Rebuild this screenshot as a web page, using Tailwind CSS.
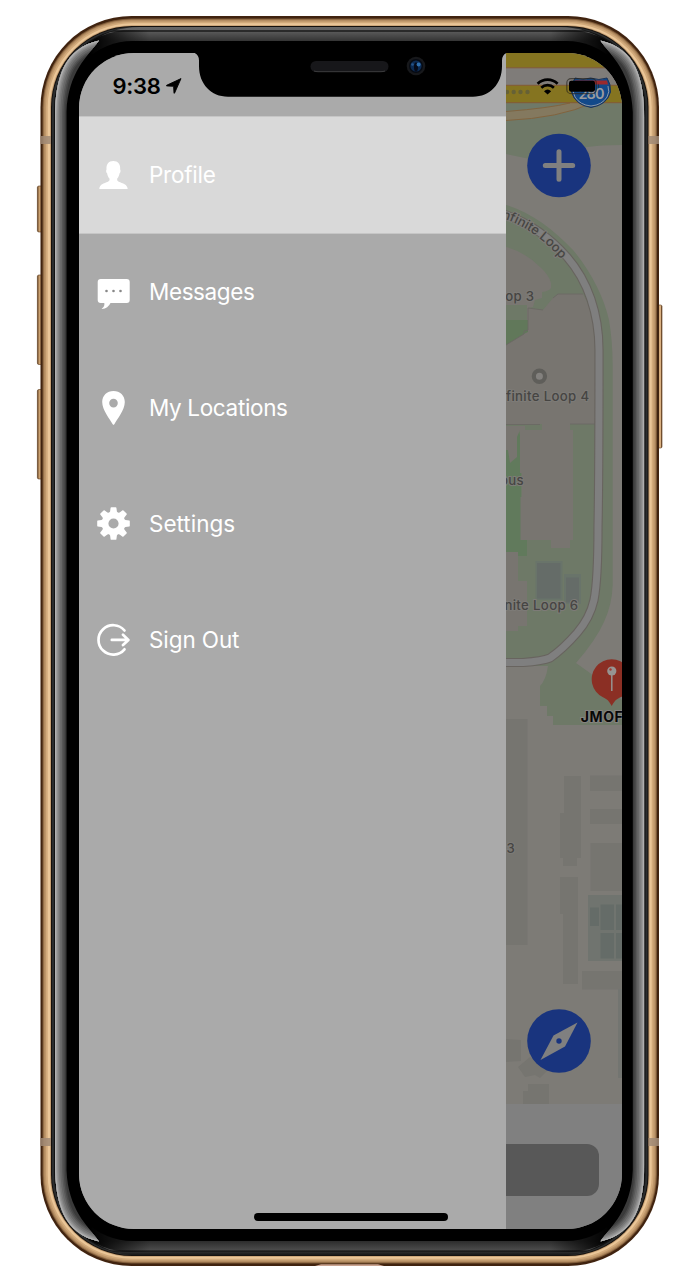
<!DOCTYPE html>
<html lang="en">
<head>
<meta charset="utf-8">
<title>Menu</title>
<script src="https://cdn.jsdelivr.net/npm/@tailwindcss/browser@4"></script>
</head>
<body class="bg-white">
<div class="relative w-[699px] h-[1282px] overflow-hidden bg-white pt-[53px] pl-[79px] font-['Inter',sans-serif]">

  <!-- Device body -->
  <svg class="absolute inset-0" width="699" height="1282" viewBox="0 0 699 1282">
    <defs>
      <linearGradient id="btn" x1="0" x2="1"><stop offset="0" stop-color="#5a3818"/><stop offset=".3" stop-color="#c9a070"/><stop offset=".75" stop-color="#dab183"/><stop offset="1" stop-color="#4a2a10"/></linearGradient>
      <linearGradient id="topg" gradientUnits="userSpaceOnUse" x1="0" x2="0" y1="27" y2="41"><stop offset="0" stop-color="#666"/><stop offset=".22" stop-color="#636363"/><stop offset=".25" stop-color="#2a2a2a"/><stop offset=".33" stop-color="#2a2a2a"/><stop offset=".36" stop-color="#585858"/><stop offset="1" stop-color="#343434"/></linearGradient>
      <linearGradient id="botg" gradientUnits="userSpaceOnUse" x1="0" x2="0" y1="1241" y2="1256"><stop offset="0" stop-color="#2c2c2c"/><stop offset=".6" stop-color="#4c4c4c"/><stop offset=".66" stop-color="#111"/><stop offset=".75" stop-color="#2a2a2a"/><stop offset="1" stop-color="#111"/></linearGradient>
      <linearGradient id="fade" gradientUnits="userSpaceOnUse" x1="55" x2="644" y1="0" y2="0"><stop offset=".06" stop-color="#000"/><stop offset=".16" stop-color="#000" stop-opacity="0"/><stop offset=".84" stop-color="#000" stop-opacity="0"/><stop offset=".94" stop-color="#000"/></linearGradient>
      <clipPath id="wc"><path d="M55 118C55 78 64 48 99 40.500C88 56 68 72 66.500 112V1170C68 1210 88 1226 99 1241.500C64 1234 55 1204 55 1164Z"/></clipPath>
      <path id="edge" d="M55 118C55 78 64 48 99 40.500M55 117V1165M55 1164C55 1204 64 1234 99 1241.500"/>
    </defs>
    <g fill="url(#btn)" stroke="#5a3818" stroke-width=".6">
      <rect x="37.4" y="186" width="6" height="46" rx="1.5"/>
      <rect x="37.4" y="275" width="6" height="89.500" rx="1.5"/>
      <rect x="37.4" y="389.500" width="6" height="89.500" rx="1.5"/>
      <rect x="656" y="305" width="6" height="143" rx="1.5"/>
    </g>
    <rect x="40.500" y="16" width="618.500" height="1250" rx="91" fill="#40230f"/>
    <rect x="42.500" y="18.500" width="614.500" height="1245" rx="89" fill="#7b5836"/>
    <rect x="43.500" y="19.500" width="612.500" height="1243" rx="88" fill="#a98259"/>
    <rect x="44.500" y="20.500" width="610.500" height="1241" rx="87" fill="#bd966a"/>
    <rect x="46" y="21.800" width="607.500" height="1238.400" rx="85.500" fill="#d2aa7b"/>
    <rect x="47.700" y="23.300" width="604" height="1235.400" rx="84" fill="#eac698"/>
    <rect x="50" y="25.200" width="599.500" height="1231.600" rx="82" fill="#c59e72"/>
    <rect x="51" y="26" width="597.500" height="1230" rx="81" fill="#15100c"/>
    <rect x="52" y="27" width="595.500" height="1228" rx="80" fill="#2b2d2e"/>
    <rect x="54" y="28" width="591.500" height="1226" rx="79" fill="#121212"/>
    <path d="M60 100C70 52 98 27 140 27H559C601 27 629 52 639 100Z" fill="url(#topg)"/>
    <path d="M60 1182C70 1230 98 1255.500 140 1255.500H559C601 1255.500 629 1230 639 1182Z" fill="url(#botg)"/>
    <rect x="55" y="30" width="589" height="1222" rx="76" fill="url(#fade)"/>
    <rect x="66.500" y="41" width="566" height="1200" rx="66" fill="#000"/>
    <g id="w1" clip-path="url(#wc)" fill="none">
      <rect x="50" y="30" width="60" height="1222" fill="#3a3a3a"/>
      <use href="#edge" stroke="#484848" stroke-width="20"/>
      <use href="#edge" stroke="#585858" stroke-width="17"/>
      <use href="#edge" stroke="#686868" stroke-width="14"/>
      <use href="#edge" stroke="#787878" stroke-width="10.500"/>
      <use href="#edge" stroke="#888888" stroke-width="7.500"/>
      <use href="#edge" stroke="#989898" stroke-width="5"/>
      <use href="#edge" stroke="#b0b0b0" stroke-width="2.500"/>
    </g>
    <use href="#w1" transform="matrix(-1 0 0 1 699.3 0)"/>
    <rect x="79" y="53" width="543" height="1176" rx="54" fill="#000"/>
    <g fill="#a08a76" fill-opacity=".85">
      <rect x="40" y="136" width="11" height="8"/><rect x="648.500" y="136" width="10.500" height="8"/>
      <rect x="40" y="1138" width="11" height="8"/><rect x="648.500" y="1138" width="10.500" height="8"/>
    </g>
    <path d="M315 1266L321 1264.200H378L384 1266Z" fill="#c9a390"/>
  </svg>

  <!-- Screen -->
  <div class="relative flex w-[543px] h-[1176px] overflow-hidden rounded-[55px] bg-[#808080]">

    <aside class="flex w-[427px] shrink-0 flex-col bg-[#aaaaaa]">
      <div class="flex h-[63px] shrink-0 items-center gap-[5px] pl-[33.5px] pt-[3px] text-black">
        <span class="w-[48.5px] whitespace-nowrap text-[22px] leading-[26px] font-semibold tracking-[-0.3px]">9:38</span>
        <svg width="16" height="16" viewBox="0 0 16 16"><path d="M15 .6L.6 7.300Q0 7.700.7 7.900L7.600 8.300L8 15Q8.200 15.700 8.600 15Z" fill="#000" stroke="#000" stroke-width=".9" stroke-linejoin="round"/></svg>
      </div>
      <nav class="flex flex-col text-[22.5px] leading-none text-white">
        <div class="flex h-[118px] items-center gap-[19px] border-y border-[#c6c6c6] bg-[#d9d9d9] pl-[18px]">
          <svg width="33" height="34" viewBox="0 0 33 34"><path d="M2.300 31C2.400 26.500 7 25.300 11 23.800Q13 22.900 12.600 20.700C11 19 10.400 17 10.200 15.500C8.800 14 9 12.500 9.500 11.500C9.200 6 11.500 3 16.300 3S23.500 6 23.200 11.500C23.700 12.500 23.800 14 22.500 15.500C22.300 17 21.600 19 20.100 20.700Q19.700 22.900 21.700 23.800C25.700 25.300 30.500 26.500 30.700 31Z" fill="#fff"/></svg>
          <span class="tracking-[-0.25px]">Profile</span>
        </div>
        <div class="flex h-[116px] items-center gap-[19px] pl-[18px]">
          <svg width="33" height="34" viewBox="0 0 33 34"><path d="M3.700 4H29.700Q32.700 4 32.700 7V25Q32.700 28 29.700 28H13.500Q11 33.500 5 34Q4.300 34 5 33.500Q8 31 7.300 28H3.700Q.7 28 .7 25V7Q.7 4 3.700 4Z" fill="#fff"/><g fill="#888"><circle cx="9.500" cy="16" r="1.300"/><circle cx="16.500" cy="16" r="1.300"/><circle cx="23.500" cy="16" r="1.300"/></g></svg>
          <span class="tracking-[-0.4px]">Messages</span>
        </div>
        <div class="flex h-[116px] items-center gap-[19px] pl-[18px]">
          <svg width="33" height="34" viewBox="0 0 33 34"><path fill-rule="evenodd" d="M16.500 0C23 0 27.800 4.500 27.800 11C27.800 19 20 28.500 17.300 33.200Q16.500 34.400 15.700 33.200C13 28.500 5.200 19 5.200 11C5.200 4.500 10 0 16.500 0ZM16.500 7.800A4.300 4.300 0 1 0 16.500 16.400A4.300 4.300 0 1 0 16.500 7.800Z" fill="#fff"/></svg>
          <span class="tracking-[-0.35px]">My Locations</span>
        </div>
        <div class="flex h-[116px] items-center gap-[19px] pl-[18px]">
          <svg width="33" height="34" viewBox="-16.500 -16.500 33 34"><defs><path id="tooth" d="M-5.300 -9L-3.400 -12L-2.900 -15.800Q-2.800 -16.300 -2.200 -16.300H2.200Q2.800 -16.300 2.900 -15.800L3.400 -12L5.300 -9Z"/></defs><g fill="#fff"><circle r="8.400" fill="none" stroke="#fff" stroke-width="6.600"/><use href="#tooth"/><use href="#tooth" transform="rotate(45)"/><use href="#tooth" transform="rotate(90)"/><use href="#tooth" transform="rotate(135)"/><use href="#tooth" transform="rotate(180)"/><use href="#tooth" transform="rotate(225)"/><use href="#tooth" transform="rotate(270)"/><use href="#tooth" transform="rotate(315)"/></g></svg>
          <span>Settings</span>
        </div>
        <div class="flex h-[116px] items-center gap-[19px] pl-[18px]">
          <svg width="33" height="34" viewBox="0 0 33 34" fill="none" stroke="#fff" stroke-width="2.700" stroke-linecap="round" stroke-linejoin="round"><path d="M27.500 7.500A14.700 14.700 0 1 0 27.500 26.300"/><path d="M14.800 16.900H31.200M26 11.800L31.400 16.900L26 22"/></svg>
          <span class="tracking-[-0.1px]">Sign Out</span>
        </div>
      </nav>
      <div class="mt-auto mb-[8px] ml-[174.500px] h-[8px] w-[194px] rounded-full bg-black"></div>
    </aside>

    <!-- Dimmed map behind the drawer -->
    <section class="flex w-[116px] flex-col">
      <svg class="shrink-0" width="116" height="1051" viewBox="506 53 116 1051">
        <rect x="506" y="53" width="116" height="1051" fill="#7d7b76"/>
        <path d="M506 100H622V145Q600 145 587 147Q560 156 530 159L506 154Z" fill="#6f7968"/>
        <rect x="506" y="68" width="116" height="18" fill="#7f7c79"/>
        <path d="M506 112Q550 108 570 103H592Q560 118 506 120.500Z" fill="#84795f"/>
        <path d="M506 111.500Q550 108 570 103M506 120.500Q560 118 592 103" fill="none" stroke="#81643f" stroke-width="1"/>
        <rect x="506" y="53" width="116" height="14.500" fill="#857420"/>
        <rect x="506" y="85.500" width="116" height="17" fill="#857420"/>
        <path d="M506 67.800H622M506 85.300H622M506 102.700H622" stroke="#845b30" stroke-width="1"/>
        <g fill="#666136"><circle cx="507" cy="92" r="2.200"/><circle cx="513.700" cy="92" r="2.200"/><circle cx="520.500" cy="92" r="2.200"/><circle cx="527.500" cy="92" r="2.200"/></g>

        <!-- Park around the loop road -->
        <path d="M506 205C530 212 553 229 573 250C590 270 604 297 609 320Q612.500 340 612.700 365V585Q612 605 604 622Q596 640 576 663L590 673L622 700V725H553V716H547V706H540V686Q546 680 548 666H506Z" fill="#6e7967"/>
        <path d="M506 247Q525 252 540 267Q549 275 551 283V288Q549 291 542 292V298L535 300L533 307L528 308V320H506Z" fill="#797671"/>
        <path d="M506 305H527V320H506Z" fill="#6e7967"/>
        <path d="M506 320H528V332L524 334L506 345Z" fill="#61785a"/>
        <path d="M528 308L543 310L553 298L558 294H583Q598 320 597 360V424H506V345L524 334L528 332Z" fill="#787570"/>
        <path d="M506 345L524 334V331L528 330V308L543 310M553 298L558 294H583M506 424.500H540M570 424H597" fill="none" stroke="#6b6964" stroke-width=".9"/>
        <path d="M506 427H518L521 440V540H527V556H506Z" fill="#617a5c"/>
        <path d="M506 426H525V430H520L517 437V457L510 463L508 450H506Z" fill="#787570"/>
        <path d="M542 424H570V430H573V540H570V548H551V540H520.500V497H522V473H520V430H542Z" fill="#787570"/>
        <path d="M506 552H518V581H527V626H518V631H506Z" fill="#787570"/>
        <rect x="535.500" y="561" width="27" height="39" fill="#69746a"/><rect x="564" y="574" width="17" height="30" fill="#69746a"/>
        <rect x="537" y="563" width="23.500" height="35.500" fill="#656c68"/><rect x="566" y="577.500" width="13" height="25" fill="#656c68"/>
        <g fill="none">
          <path d="M500 213C530 222 552 240 567 257C588 281 599 314 599 350C599 400 599 480 598 527Q598 580 594 600Q590 618 577 633Q563 649 550 658Q543 661 523 662.500H506" stroke="#68645f" stroke-width="9.200"/>
          <path d="M500 213C530 222 552 240 567 257C588 281 599 314 599 350C599 400 599 480 598 527Q598 580 594 600Q590 618 577 633Q563 649 550 658Q543 661 523 662.500H506" stroke="#7f7f7f" stroke-width="7"/>
        </g>

        <g fill="#767570">
          <rect x="506" y="719" width="21.500" height="226"/>
          <path d="M564 776H581V858H577V866H563V858H560V813H564Z"/>
          <rect x="590" y="775.500" width="32" height="15.500"/><rect x="590" y="809" width="32" height="15"/><rect x="590.500" y="843" width="31.500" height="48"/>
          <path d="M560 877H578V984H563V914H560Z"/>
          <rect x="582" y="971" width="40" height="18.500"/>
          <path d="M506 1039L521 1040V1061L506 1062Z"/>
          <path d="M518 1067L530 1057L548 1070L540 1078L535 1075L525 1077Z"/>
          <path d="M528 1084H549V1104H523V1091H528Z"/>
        </g>
        <rect x="618" y="989" width="4" height="89" fill="#737571"/>
        <rect x="588" y="895" width="34" height="66" fill="#70746f"/>
        <g fill="#656c68"><rect x="590" y="907.500" width="9" height="18.500"/><rect x="600.500" y="904.500" width="13.500" height="25.500"/><rect x="616" y="904.500" width="6" height="25.500"/><rect x="600.500" y="933" width="13.500" height="25.500"/><rect x="616" y="933" width="6" height="25.500"/></g>

        <!-- Labels -->
        <circle cx="539.400" cy="376.300" r="5.600" fill="#83817e" stroke="#5f5e5a" stroke-width="4.200"/>
        <path id="curve" d="M490 215C522 222 542 238 562 260" fill="none"/>
        <g font-family="Inter, sans-serif" font-size="13.200" font-weight="500" fill="#464543" stroke="#7d7b77" stroke-width="2" paint-order="stroke" letter-spacing=".35">
          <text font-size="13" letter-spacing="0" text-anchor="end"><textPath href="#curve" startOffset="99%">Infinite Loop</textPath></text>
          <text x="534.500" y="301" text-anchor="end">Loop 3</text>
          <text x="589.500" y="400.500" text-anchor="end">Infinite Loop 4</text>
          <text x="524" y="485" text-anchor="end">Campus</text>
          <text x="578.500" y="610" text-anchor="end">Infinite Loop 6</text>
          <text x="506.500" y="853">3</text>
          <text x="580.800" y="721.500" font-size="14" font-weight="700" fill="#080808" stroke="#85837f" letter-spacing=".6">JMOF</text>
        </g>
        <path d="M611.700 706C609 701 607 699 603 697.300A20 20 0 1 1 620.400 697.300C616.500 699 614.500 701 611.700 706Z" fill="#8b2f24"/>
        <path d="M611.800 675V691" stroke="#969492" stroke-width="1.500"/><circle cx="611.800" cy="671" r="4.600" fill="#969492"/><circle cx="610.500" cy="669.500" r="1.200" fill="#a23a30"/>

        <!-- Highway shield -->
        <path d="M575 78Q583 81 590.500 78Q599 81 607 78Q611 84 610.500 92Q607 105 591 107.500Q575 105 571.500 92Q571 84 575 78Z" fill="#12498a" stroke="#1c3459" stroke-width="1"/>
        <path d="M574 86Q572 92 575 97Q580 105 591 106Q602 105 607 97Q610 92 608 86" fill="none" stroke="#8a96a6" stroke-width="1"/>
        <path d="M575 80.500H607L608 84.500H574Z" fill="#9c2a2d"/>
        <text x="591" y="99" font-family="Inter, sans-serif" font-size="14.500" font-weight="600" text-anchor="middle" letter-spacing="-.9" fill="#9a9c9f">280</text>

        <!-- Wi-Fi and battery -->
        <g fill="none" stroke="#000" stroke-width="2.700"><path d="M537.600 83.700A14.200 14.200 0 0 1 557.600 83.700"/><path d="M541.300 87.700A9 9 0 0 1 553.900 87.700"/></g>
        <path d="M547.600 94.500L544 91.200A5.400 5.400 0 0 1 551.200 91.200Z" fill="#000"/>
        <rect x="566.800" y="78.700" width="29.500" height="15" rx="4.300" fill="none" stroke="#26231c" stroke-opacity=".65" stroke-width="1.200"/>
        <path d="M598 83.500Q600.500 86 598 89Z" fill="#222" fill-opacity=".6"/>
        <rect x="569" y="80.800" width="26" height="11" rx="2.200" fill="#000"/>

        <!-- Round map buttons -->
        <circle cx="559" cy="165.500" r="31.800" fill="#19347e"/>
        <path d="M559 151.800V179.200M545.300 165.500H572.700" stroke="#808080" stroke-width="5" stroke-linecap="round"/>
        <circle cx="559" cy="1041" r="31.800" fill="#19347e"/>
        <path d="M577.500 1022.500L565 1046.500L540.500 1060L553.500 1035.500Z" fill="#808080"/><circle cx="559" cy="1041" r="2.700" fill="#19347e"/>
      </svg>
      <div class="flex-1 bg-[#808080] pt-[39.5px]">
        <div class="h-[52px] w-[93px] rounded-r-[12px] bg-[#585858]"></div>
      </div>
    </section>

    <!-- Notch -->
    <svg class="absolute left-0 top-0" width="543" height="50" viewBox="79 53 543 50">
      <path d="M191 52Q199 53 199 60.500V66C199 84 211 96.700 228 96.700H473C490 96.700 502 84 502 66V60.500Q502 53 510 52Z" fill="#000"/>
    </svg>
  </div>

  <!-- Earpiece and camera -->
  <svg class="absolute left-[300px] top-[50px]" width="140" height="32" viewBox="300 50 140 32">
    <rect x="310.500" y="61" width="78" height="11" rx="5.500" fill="#17171a"/><path d="M314 71Q316 71.700 318 71.700H381Q383 71.700 385 71" stroke="#3c3c3e" stroke-width="1" fill="none"/>
    <circle cx="416" cy="66" r="9.300" fill="#17181b"/><circle cx="416" cy="66" r="7" fill="#060a12"/><circle cx="416" cy="66" r="5.600" fill="#0c2a52"/><ellipse cx="416" cy="67" rx="2" ry="4.500" fill="#050a18"/><circle cx="418.600" cy="64.500" r="2" fill="#2f6fae"/><circle cx="412.500" cy="64.500" r="1.300" fill="#25558c"/>
  </svg>
</div>
</body>
</html>
